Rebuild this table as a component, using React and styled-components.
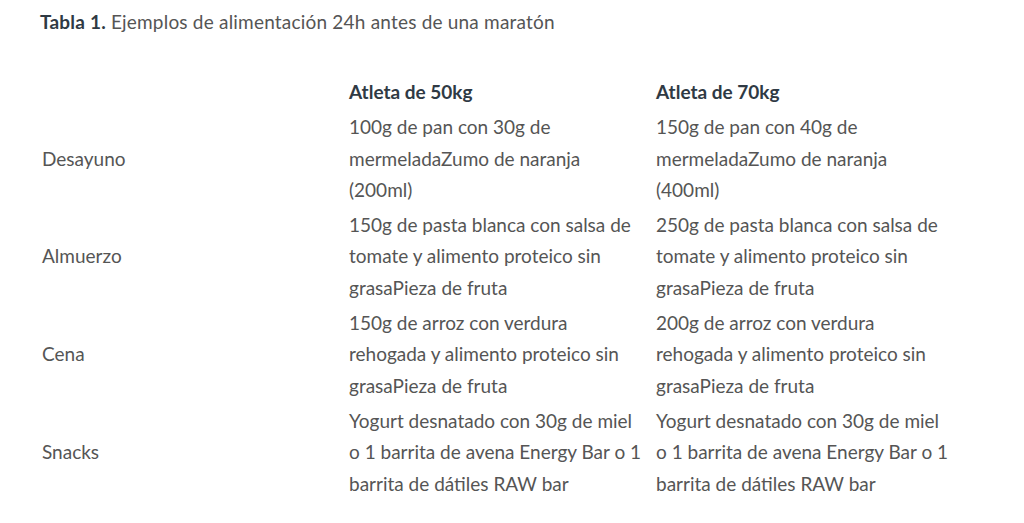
import React from 'react';
import styled, { createGlobalStyle } from 'styled-components';

const GlobalStyle = createGlobalStyle`
  body {
    margin: 0;
    background: #ffffff;
    font-family: Lato, "Noto Sans", sans-serif;
  }
`;

const Page = styled.div`
  padding: 9px 0 0 40px;
`;

const Caption = styled.p`
  margin: 0;
  font-size: 19px;
  line-height: 26px;
  letter-spacing: 0.2px;
  color: #555555;

  strong {
    color: #2f3a44;
    font-weight: 700;
  }
`;

const Table = styled.div`
  display: grid;
  grid-template-columns: 307px 307px 307px;
  margin-top: 39px;
`;

const Cell = styled.div`
  display: flex;
  align-items: center;
  padding: 2px 8px 2px 2px;
  font-size: 19px;
  line-height: 31.3px;
  white-space: nowrap;
  color: ${(p) => (p.head ? '#2f3a44' : '#555555')};
  font-weight: ${(p) => (p.head ? 700 : 400)};
`;

const Lines = ({ text }) => (
  <span>
    {text.map((line, i) => (
      <React.Fragment key={i}>
        {i > 0 && <br />}
        {line}
      </React.Fragment>
    ))}
  </span>
);

const rows = [
  {
    meal: 'Desayuno',
    a: ['100g de pan con 30g de', 'mermeladaZumo de naranja', '(200ml)'],
    b: ['150g de pan con 40g de', 'mermeladaZumo de naranja', '(400ml)'],
  },
  {
    meal: 'Almuerzo',
    a: ['150g de pasta blanca con salsa de', 'tomate y alimento proteico sin', 'grasaPieza de fruta'],
    b: ['250g de pasta blanca con salsa de', 'tomate y alimento proteico sin', 'grasaPieza de fruta'],
  },
  {
    meal: 'Cena',
    a: ['150g de arroz con verdura', 'rehogada y alimento proteico sin', 'grasaPieza de fruta'],
    b: ['200g de arroz con verdura', 'rehogada y alimento proteico sin', 'grasaPieza de fruta'],
  },
  {
    meal: 'Snacks',
    a: ['Yogurt desnatado con 30g de miel', 'o 1 barrita de avena Energy Bar o 1', 'barrita de dátiles RAW bar'],
    b: ['Yogurt desnatado con 30g de miel', 'o 1 barrita de avena Energy Bar o 1', 'barrita de dátiles RAW bar'],
  },
];

export default function App() {
  return (
    <Page>
      <GlobalStyle />
      <Caption>
        <strong>Tabla 1.</strong> Ejemplos de alimentación 24h antes de una maratón
      </Caption>
      <Table>
        <Cell />
        <Cell head>Atleta de 50kg</Cell>
        <Cell head>Atleta de 70kg</Cell>
        {rows.map((r) => (
          <React.Fragment key={r.meal}>
            <Cell>{r.meal}</Cell>
            <Cell><Lines text={r.a} /></Cell>
            <Cell><Lines text={r.b} /></Cell>
          </React.Fragment>
        ))}
      </Table>
    </Page>
  );
}
